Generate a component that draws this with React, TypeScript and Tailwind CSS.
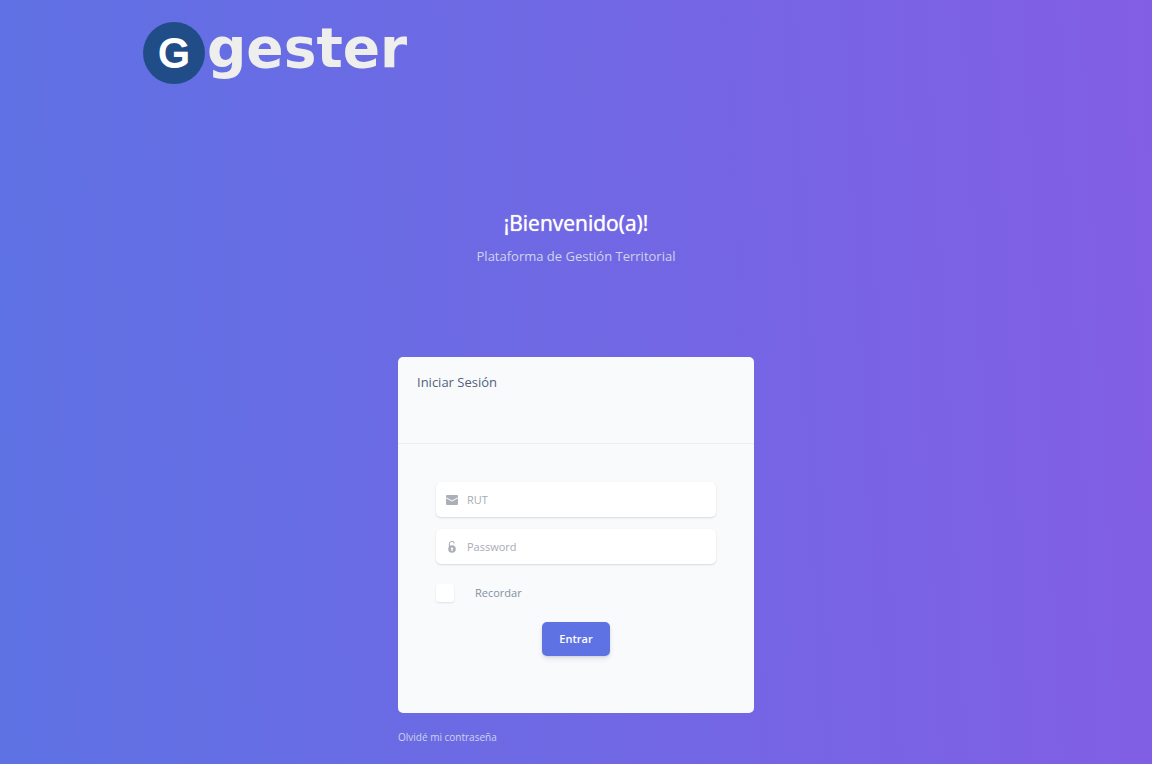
import type { ReactNode } from "react";

type FieldProps = {
  id: string;
  label: string;
  type: string;
  icon: ReactNode;
};

function EnvelopeIcon() {
  return (
    <svg viewBox="0 0 12 10" className="h-[10px] w-3" fill="currentColor" aria-hidden="true">
      <path d="M1 0h10a1 1 0 0 1 1 1v1.2L6 5.4 0 2.200V1a1 1 0 0 1 1-1Z" />
      <path d="M0 3.200 6 6.400l6-3.200V9a1 1 0 0 1-1 1H1a1 1 0 0 1-1-1Z" />
    </svg>
  );
}

function OpenLockIcon() {
  return (
    <svg viewBox="0 0 12 12" className="size-3" fill="none" stroke="currentColor" aria-hidden="true">
      <path d="M3.4 6V3A2.500 2.500 0 0 1 8.300 2.300" strokeWidth="1.1" />
      <path
        d="M6 4.200a3.800 3.800 0 1 1 0 7.600A3.800 3.800 0 0 1 6 4.200Zm0 2.200a1.200 1.200 0 0 0-.6 2.200v1.300h1.200V8.600a1.200 1.200 0 0 0-.6-2.200Z"
        fill="currentColor"
        fillRule="evenodd"
        stroke="none"
      />
    </svg>
  );
}

function Field({ id, label, type, icon }: FieldProps) {
  return (
    <div className="flex h-[35px] items-center rounded-[5px] bg-white text-[#acafb8] shadow-[0_1px_2px_rgba(50,50,93,0.16)]">
      <label htmlFor={id} className="flex w-[31px] shrink-0 justify-center" aria-label={label}>
        {icon}
      </label>
      <input
        id={id}
        type={type}
        placeholder={label}
        className="h-full min-w-0 flex-1 rounded-r bg-transparent pr-3 text-[11px] text-[#8898aa] outline-none placeholder:text-[#a8acb4]"
      />
    </div>
  );
}

export default function App() {
  return (
    <div className="min-h-screen bg-[linear-gradient(87deg,#5e72e4_0%,#825ee4_100%)] px-4 pb-4 font-['Open_Sans',sans-serif]">
      <header className="mx-auto w-full max-w-[866px] pt-[22px]">
        <a href="#" className="flex w-fit items-start gap-[2px] leading-none">
          <span className="flex size-[62px] items-center justify-center rounded-full bg-[#204d87] font-['Liberation_Sans',sans-serif] text-[40px] text-white [-webkit-text-stroke:2px_white]">
            G
          </span>
          <span className="font-['DejaVu_Sans',sans-serif] text-[55px] leading-[53px] font-bold text-[#eeeeec]">
            gester
          </span>
        </a>
      </header>

      <main className="mx-auto w-full max-w-[356px]">
        <div className="pt-[125px] text-center">
          <h1 className="text-[21px] leading-[29px] font-normal text-white [text-shadow:0_0_1px_#fff]">
            ¡Bienvenido(a)!
          </h1>
          <p className="mt-2 text-[13px] leading-5 text-[#ced4ea]">
            Plataforma de Gestión Territorial
          </p>
        </div>

        <section className="mt-[91px] rounded-[5px] bg-[#f8fafb]">
          <div className="h-[87px] border-b border-black/5 px-[19px] pt-[15px]">
            <h2 className="text-[13px] leading-5 text-[#525f7f]">Iniciar Sesión</h2>
          </div>
          <form
            className="flex flex-col px-[38px] pt-[38px] pb-[57px]"
            onSubmit={(event) => event.preventDefault()}
          >
            <div className="flex flex-col gap-3">
              <Field id="rut" label="RUT" type="text" icon={<EnvelopeIcon />} />
              <Field id="password" label="Password" type="password" icon={<OpenLockIcon />} />
            </div>
            <label className="mt-5 flex items-center gap-[21px] text-[11px] leading-[18px] text-[#8490a4]">
              <input
                type="checkbox"
                className="size-[18px] appearance-none rounded-[3px] bg-white shadow-[0_1px_2px_rgba(50,50,93,0.12)] checked:bg-[#5e72e4]"
              />
              Recordar
            </label>
            <button
              type="submit"
              className="mt-5 h-[34px] self-center rounded-[5px] bg-[#5e72e4] px-[17px] text-[11px] font-semibold text-white shadow-[0_3px_5px_rgba(50,50,93,0.11),0_1px_2px_rgba(0,0,0,0.08)]"
            >
              Entrar
            </button>
          </form>
        </section>

        <a href="#" className="mt-4 block w-fit text-[10px] leading-4 text-[#ced4ea]">
          Olvidé mi contraseña
        </a>
      </main>
    </div>
  );
}
